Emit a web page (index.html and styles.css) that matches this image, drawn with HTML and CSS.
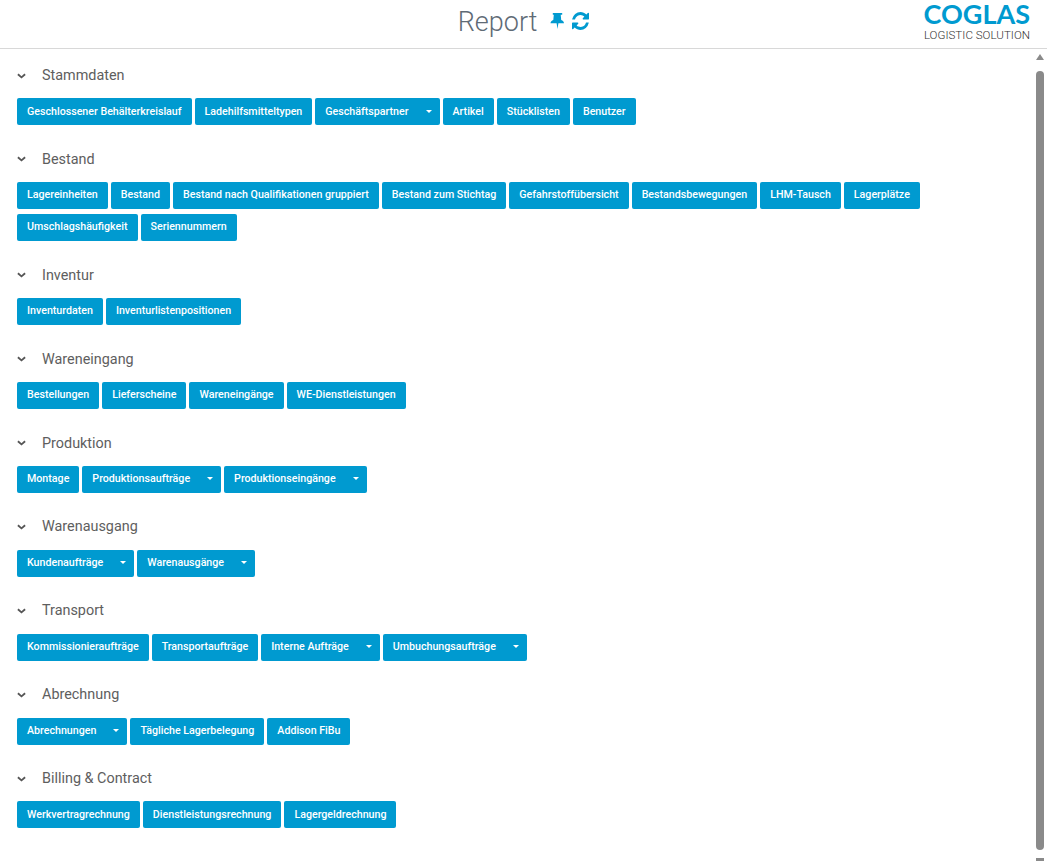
FILE: index.html
```html
<!DOCTYPE html>
<html lang="de">
<head>
    <meta charset="UTF-8">
    <meta name="viewport" content="width=device-width, initial-scale=1.0">
    <title>Report</title>
    <link rel="stylesheet" href="styles.css">
</head>
<body>
    <header class="topbar">
        <div class="topbar-title">
            <h1>Report</h1>
            <svg class="tool-icon pin" viewBox="0 0 15 16"><path d="M2.800 0h9.400v1.800h-1.500l.5 5.100c1.600.7 2.800 1.800 2.800 3.300H8.400L7.500 16l-.9-5.800H.5c0-1.500 1.200-2.600 2.800-3.300l.5-5.100H2.800z"/></svg>
            <svg class="tool-icon sync" viewBox="0 0 1536 1536" preserveAspectRatio="none"><path d="M1511 928q0 5-1 7-64 268-268 434.500T764 1536q-146 0-282.500-55T238 1324l-129 129q-19 19-45 19t-45-19-19-45V960q0-26 19-45t45-19h448q26 0 45 19t19 45-19 45l-137 137q71 66 161 102t187 36q134 0 250-65t186-179q11-17 53-117 8-23 30-23h192q13 0 22.500 9.500t9.500 22.500zM1536 128v448q0 26-19 45t-45 19h-448q-26 0-45-19t-19-45 19-45l138-138Q969 256 768 256q-134 0-250 65T332 500q-11 17-53 117-8 23-30 23H50q-13 0-22.500-9.500T18 608v-7q65-268 270-434.500T768 0q146 0 284 55.500T1297 212l130-129q19-19 45-19t45 19 19 45z"/></svg>
        </div>
        <div class="logo">
            <span class="logo-name">COGLAS</span>
            <span class="logo-sub">LOGISTIC SOLUTION</span>
        </div>
    </header>

    <div class="content-wrap">
        <main class="content">
            <section class="group">
                <h2 class="group-title"><svg class="chevron" viewBox="0 0 10 6"><path d="M1 1l4 3.500L9 1"/></svg>Stammdaten</h2>
                <div class="buttons">
                    <a class="btn">Geschlossener Behälterkreislauf</a>
                    <a class="btn">Ladehilfsmitteltypen</a>
                    <a class="btn split">Geschäftspartner<span class="caret"></span></a>
                    <a class="btn">Artikel</a>
                    <a class="btn">Stücklisten</a>
                    <a class="btn">Benutzer</a>
                </div>
            </section>
            <section class="group">
                <h2 class="group-title"><svg class="chevron" viewBox="0 0 10 6"><path d="M1 1l4 3.500L9 1"/></svg>Bestand</h2>
                <div class="buttons">
                    <a class="btn">Lagereinheiten</a>
                    <a class="btn">Bestand</a>
                    <a class="btn">Bestand nach Qualifikationen gruppiert</a>
                    <a class="btn">Bestand zum Stichtag</a>
                    <a class="btn">Gefahrstoffübersicht</a>
                    <a class="btn">Bestandsbewegungen</a>
                    <a class="btn">LHM-Tausch</a>
                    <a class="btn">Lagerplätze</a>
                    <a class="btn">Umschlagshäufigkeit</a>
                    <a class="btn">Seriennummern</a>
                </div>
            </section>
            <section class="group">
                <h2 class="group-title"><svg class="chevron" viewBox="0 0 10 6"><path d="M1 1l4 3.500L9 1"/></svg>Inventur</h2>
                <div class="buttons">
                    <a class="btn">Inventurdaten</a>
                    <a class="btn">Inventurlistenpositionen</a>
                </div>
            </section>
            <section class="group">
                <h2 class="group-title"><svg class="chevron" viewBox="0 0 10 6"><path d="M1 1l4 3.500L9 1"/></svg>Wareneingang</h2>
                <div class="buttons">
                    <a class="btn">Bestellungen</a>
                    <a class="btn">Lieferscheine</a>
                    <a class="btn">Wareneingänge</a>
                    <a class="btn">WE-Dienstleistungen</a>
                </div>
            </section>
            <section class="group">
                <h2 class="group-title"><svg class="chevron" viewBox="0 0 10 6"><path d="M1 1l4 3.500L9 1"/></svg>Produktion</h2>
                <div class="buttons">
                    <a class="btn">Montage</a>
                    <a class="btn split">Produktionsaufträge<span class="caret"></span></a>
                    <a class="btn split">Produktionseingänge<span class="caret"></span></a>
                </div>
            </section>
            <section class="group">
                <h2 class="group-title"><svg class="chevron" viewBox="0 0 10 6"><path d="M1 1l4 3.500L9 1"/></svg>Warenausgang</h2>
                <div class="buttons">
                    <a class="btn split">Kundenaufträge<span class="caret"></span></a>
                    <a class="btn split">Warenausgänge<span class="caret"></span></a>
                </div>
            </section>
            <section class="group">
                <h2 class="group-title"><svg class="chevron" viewBox="0 0 10 6"><path d="M1 1l4 3.500L9 1"/></svg>Transport</h2>
                <div class="buttons">
                    <a class="btn">Kommissionieraufträge</a>
                    <a class="btn">Transportaufträge</a>
                    <a class="btn split">Interne Aufträge<span class="caret"></span></a>
                    <a class="btn split">Umbuchungsaufträge<span class="caret"></span></a>
                </div>
            </section>
            <section class="group">
                <h2 class="group-title"><svg class="chevron" viewBox="0 0 10 6"><path d="M1 1l4 3.500L9 1"/></svg>Abrechnung</h2>
                <div class="buttons">
                    <a class="btn split">Abrechnungen<span class="caret"></span></a>
                    <a class="btn">Tägliche Lagerbelegung</a>
                    <a class="btn">Addison FiBu</a>
                </div>
            </section>
            <section class="group">
                <h2 class="group-title"><svg class="chevron" viewBox="0 0 10 6"><path d="M1 1l4 3.500L9 1"/></svg>Billing &amp; Contract</h2>
                <div class="buttons">
                    <a class="btn">Werkvertragrechnung</a>
                    <a class="btn">Dienstleistungsrechnung</a>
                    <a class="btn">Lagergeldrechnung</a>
                </div>
            </section>
        </main>
        <div class="scrollbar">
            <span class="arrow-up"></span>
            <span class="thumb"></span>
            <span class="arrow-down"></span>
        </div>
    </div>
</body>
</html>
```
FILE: styles.css
```css
html, body {
    height: 100%;
}
body {
    margin: 0;
    display: flex;
    flex-direction: column;
    background: #fff;
    color: #555;
    font-family: Roboto, "Liberation Sans", sans-serif;
    overflow: hidden;
}

/* Kopfzeile */
.topbar {
    flex: none;
    height: 48px;
    display: flex;
    justify-content: center;
    position: relative;
    border-bottom: 1px solid #d8d8d8;
}
.topbar-title {
    display: flex;
    align-items: center;
    height: 44px;
}
.topbar-title h1 {
    margin: 0 13px 0 0;
    font-size: 27px;
    font-weight: 300;
    color: #5f6b76;
}
.tool-icon {
    fill: #009ad0;
}
.pin {
    width: 15px;
    height: 16px;
    margin: 0 7px 3px 0;
}
.sync {
    width: 17px;
    height: 18px;
    margin-bottom: 3px;
}
.logo {
    position: absolute;
    top: 0;
    right: 17px;
    display: flex;
    flex-direction: column;
    align-items: flex-end;
}
.logo-name {
    font-family: Lato, sans-serif;
    font-size: 27px;
    font-weight: 700;
    line-height: 28px;
    color: #009ad0;
}
.logo-sub {
    font-size: 11.6px;
    font-weight: 300;
    line-height: 14px;
    color: #333;
}

/* Inhalt */
.content-wrap {
    flex: 1;
    min-height: 0;
    display: flex;
}
.content {
    flex: 1;
    padding: 16.100px 12px 0 17px;
}
.group {
    margin-bottom: 23.600px;
}
.group-title {
    margin: 0 0 12.300px;
    display: flex;
    align-items: center;
    height: 21px;
    font-size: 14.400px;
    font-weight: 400;
    color: #5e5e5e;
}
.chevron {
    width: 9px;
    height: 6px;
    margin-right: 16px;
    fill: none;
    stroke: #555;
    stroke-width: 2;
}
.buttons {
    display: flex;
    flex-wrap: wrap;
    gap: 4.950px 3px;
}
.btn {
    box-sizing: border-box;
    height: 27px;
    padding: 0 10px 1.600px;
    display: flex;
    align-items: center;
    background: #009ad0;
    border-radius: 2px;
    color: #fff;
    font-size: 10.660px;
    font-weight: 500;
    white-space: nowrap;
}
.btn.split {
    padding-right: 0;
}
.caret {
    width: 22px;
    height: 100%;
    margin-left: 9px;
    display: flex;
    align-items: center;
    justify-content: center;
}
.caret::before {
    content: '';
    border-top: 3px solid #fff;
    border-left: 3px solid transparent;
    border-right: 3px solid transparent;
}

/* Scrollleiste */
.scrollbar {
    flex: none;
    width: 10px;
    padding-right: 2px;
    display: flex;
    flex-direction: column;
    align-items: center;
}
.arrow-up {
    margin-top: 5px;
    border-bottom: 6px solid #8a8a8a;
    border-left: 4px solid transparent;
    border-right: 4px solid transparent;
}
.thumb {
    flex: 1;
    width: 8px;
    margin: 11px 0 8px;
    background: #8a8a8a;
    border-radius: 4px;
}
.arrow-down {
    width: 8px;
    height: 3px;
    background: #8a8a8a;
}
```
